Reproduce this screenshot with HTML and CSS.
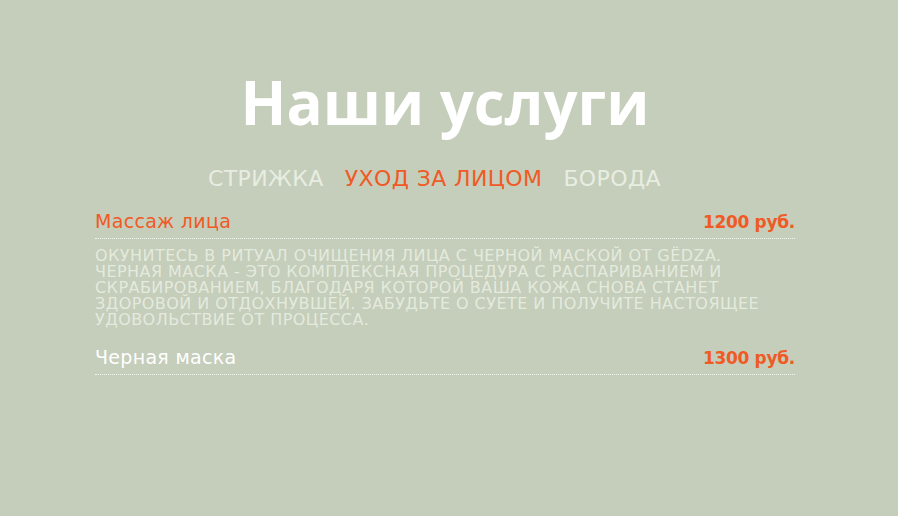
FILE: index.html
```html
<!DOCTYPE html>
<html lang="ru">
<head>
<meta charset="utf-8">
<link rel="stylesheet" href="styles.css">
</head>
<body>
<section class="services">
  <h1 class="title">Наши услуги</h1>
  <nav class="tabs">
    <span class="tab">СТРИЖКА</span>
    <span class="tab active">УХОД ЗА ЛИЦОМ</span>
    <span class="tab">БОРОДА</span>
  </nav>
  <div class="list">
    <div class="item">
      <div class="row active">
        <span class="name">Массаж лица</span>
        <span class="price">1200 руб.</span>
      </div>
      <p class="desc">Окунитесь в ритуал очищения лица с черной маской от GËDZA.<br>Черная маска - это комплексная процедура с распариванием и<br>скрабированием, благодаря которой ваша кожа снова станет<br>здоровой и отдохнувшей. Забудьте о суете и получите настоящее<br>удовольствие от процесса.</p>
    </div>
    <div class="item">
      <div class="row">
        <span class="name">Черная маска</span>
        <span class="price">1300 руб.</span>
      </div>
    </div>
  </div>
</section>
</body>
</html>
```
FILE: styles.css
```css
html, body {
  margin: 0;
  padding: 0;
  background: #c5cdbb;
  font-family: "DejaVu Sans", "Open Sans", sans-serif;
}
.services {
  width: 700px;
  margin-left: 95px;
  padding-top: 67px;
}
.title {
  margin: 0;
  text-align: center;
  color: #ffffff;
  font-family: "Open Sans", sans-serif;
  font-size: 60px;
  font-weight: 700;
  line-height: 70px;
  letter-spacing: 0;
}
.tabs {
  display: flex;
  justify-content: center;
  margin-top: 27px;
  font-size: 22px;
  line-height: 30px;
  letter-spacing: 0.4px;
}
.tab {
  color: #e8ede2;
  margin-right: 21px;
}
.tab.active {
  color: #f05a24;
}
.list {
  margin-top: 16px;
}
.row {
  display: flex;
  justify-content: space-between;
  align-items: baseline;
  border-bottom: 1px dotted #f2f4ee;
  padding-bottom: 4px;
  font-size: 18px;
  line-height: 24px;
}
.name {
  color: #ffffff;
  font-size: 19px;
  line-height: 22px;
  letter-spacing: 0.3px;
}
.row.active .name {
  color: #f05a24;
}
.price {
  color: #f05a24;
  font-weight: 700;
  font-size: 17px;
  line-height: 24px;
  letter-spacing: -0.3px;
}
.desc {
  margin: 9px 0 18px;
  text-transform: uppercase;
  color: #e4eadd;
  font-size: 16px;
  line-height: 16px;
  letter-spacing: 0.45px;
  white-space: nowrap;
}
```
